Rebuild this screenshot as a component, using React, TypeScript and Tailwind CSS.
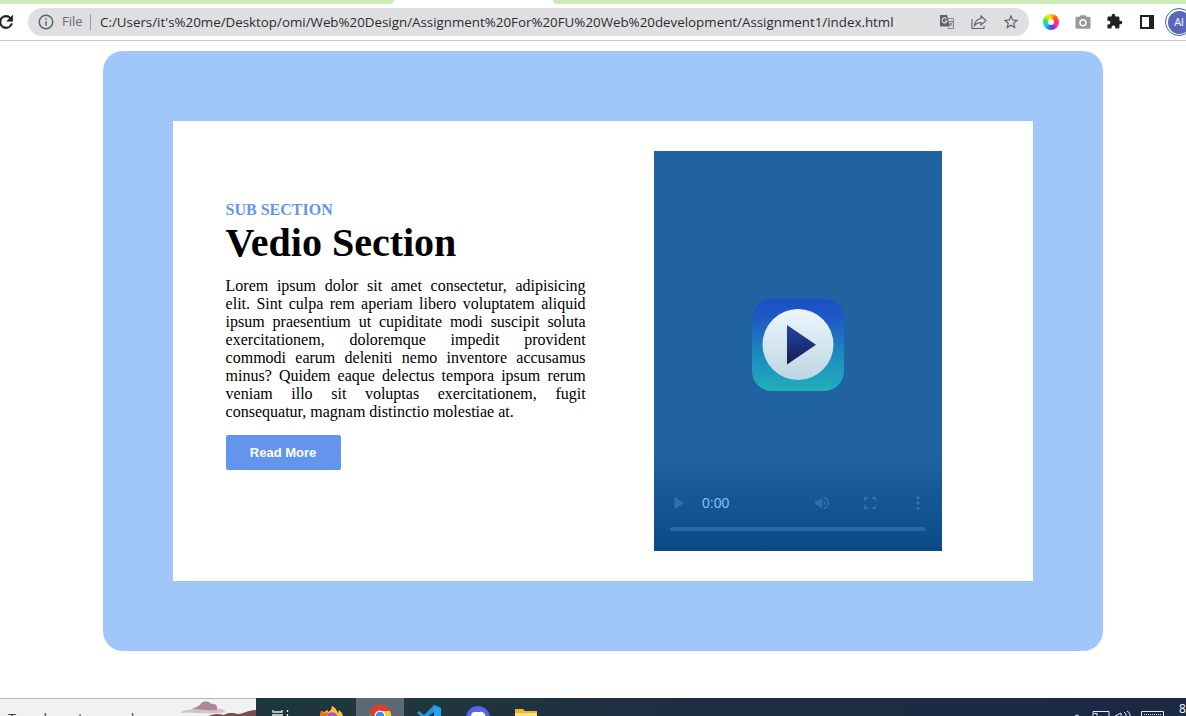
import React from "react";

const Puzzle = () => (
  <svg className="h-[17px] w-[17px]" viewBox="0 0 24 24" fill="#202124">
    <path d="M20.5 11H19V7a2 2 0 0 0-2-2h-4V3.5a2.5 2.5 0 0 0-5 0V5H4a2 2 0 0 0-2 2v3.8h1.500a2.700 2.700 0 0 1 0 5.400H2V20a2 2 0 0 0 2 2h3.800v-1.500a2.700 2.700 0 0 1 5.400 0V22H17a2 2 0 0 0 2-2v-4h1.500a2.500 2.500 0 0 0 0-5z" />
  </svg>
);

function Toolbar() {
  return (
    <div className="flex h-[37px] shrink-0 items-center border-b border-[#c9c9cc] bg-white font-['Open_Sans',sans-serif]">
      <svg className="h-5 w-5 shrink-0 -ml-1" viewBox="0 0 24 24" fill="#202124" stroke="#202124" strokeWidth="0.8">
        <path d="M17.65 6.35A7.950 7.950 0 0 0 12 4a8 8 0 1 0 7.730 10h-2.080A6 6 0 1 1 12 6c1.660 0 3.140.69 4.220 1.780L13 11h7V4z" />
      </svg>
      <div className="ml-3 flex h-7 w-[1001px] shrink-0 items-center rounded-full bg-[#dfdfe1]">
        <svg className="ml-[9px] h-[18px] w-[18px] shrink-0" viewBox="0 0 24 24" fill="#5f6368">
          <path d="M11 7h2v2h-2zm0 4h2v6h-2zm1-9a10 10 0 1 0 0 20 10 10 0 0 0 0-20zm0 18a8 8 0 1 1 0-16 8 8 0 0 1 0 16z" />
        </svg>
        <span className="ml-[7px] w-[21px] text-[13px] text-[#6a6d71]">File</span>
        <span className="ml-[7px] h-4 w-px bg-[#97999c]" />
        <span className="ml-[9px] w-[795px] whitespace-nowrap text-[13.35px] text-[#2b2d30]">
          C:/Users/it's%20me/Desktop/omi/Web%20Design/Assignment%20For%20FU%20Web%20development/Assignment1/index.html
        </span>
        <svg className="ml-[44px] h-4 w-4 shrink-0" viewBox="0 0 16 16">
          <path d="M6 4.500h8.500v10H8.500" fill="none" stroke="#85888b" />
          <path d="M1 1h7l3.200 11.500H2A1 1 0 0 1 1 11.500z" fill="#5f6368" />
          <path d="M7.500 4.800A2.500 2.500 0 1 0 8 7H5.700" fill="none" stroke="#dfdfe1" strokeWidth="1.100" />
          <path d="M10 7.500h4M12 6.500v1M13.500 7.500c-.5 2-1.500 3-2.500 3.500M11 9l2.500 3" fill="none" stroke="#74777a" strokeWidth=".9" />
        </svg>
        <svg className="ml-4 h-4 w-4 shrink-0" viewBox="0 0 16 16" fill="none" stroke="#5f6368" strokeWidth="1.100">
          <path d="M1 5v9.500h12V12" />
          <path d="M10 2l5 4.500-5 4.500V8.500C7 8.500 5 9.500 3.500 11.500 4 7.500 6.500 5 10 4.500z" />
        </svg>
        <svg className="ml-[15px] h-[18px] w-[18px] shrink-0" viewBox="0 0 24 24" fill="#5f6368">
          <path d="M22 9.240l-7.190-.62L12 2 9.190 8.630 2 9.240l5.460 4.730L5.820 21 12 17.270 18.180 21l-1.630-7.030zM12 15.400l-3.760 2.270 1-4.280-3.320-2.880 4.380-.38L12 6.100l1.710 4.040 4.380.38-3.320 2.880 1 4.280z" />
        </svg>
      </div>
      <div className="ml-[14px] flex h-4 w-4 shrink-0 items-center justify-center rounded-full bg-[conic-gradient(#ffd500,#ff5c20,#f43,#f029c8,#8729e8,#217bed,#16d8e8,#2ce54c,#c9ef19,#ffd500)]">
        <span className="h-[6px] w-[6px] rounded-full bg-white" />
      </div>
      <svg className="ml-[15px] h-[18px] w-[18px] shrink-0" viewBox="0 0 24 24" fill="#96989a">
        <path fillRule="evenodd" d="M9 3L7.200 5H4a2 2 0 0 0-2 2v12a2 2 0 0 0 2 2h16a2 2 0 0 0 2-2V7a2 2 0 0 0-2-2h-3.200L15 3zm3 5a5 5 0 1 1 0 10 5 5 0 0 1 0-10z" />
        <circle cx="12" cy="13" r="3" />
      </svg>
      <div className="ml-[14px] h-[18px] w-[18px] shrink-0"><Puzzle /></div>
      <span className="ml-4 h-[14px] w-[14px] shrink-0 border-2 border-r-[5px] border-[#202124]" />
      <div className="ml-[11px] flex h-7 w-7 shrink-0 items-center justify-center rounded-full border-[1.5px] border-[#3268ba] bg-white">
        <span className="flex h-[23px] w-[23px] items-center justify-center rounded-full bg-[#5966bb] text-[11px] text-white">Al</span>
      </div>
    </div>
  );
}

function VideoPanel() {
  return (
    <div className="flex h-[400px] w-[288px] shrink-0 flex-col bg-[linear-gradient(#2162a0_0%,#2162a0_76%,#155796_87%,#0c4a87_100%)]">
      <svg className="mx-auto mt-[147px] h-[94px] w-[94px] shrink-0" viewBox="0 0 94 94">
        <defs>
          <linearGradient id="tile" x1="0" y1="0" x2="0" y2="1">
            <stop offset="0" stopColor="#194fc7" /><stop offset=".2" stopColor="#1e59c2" /><stop offset=".65" stopColor="#1d8fc0" /><stop offset="1" stopColor="#22aebb" />
          </linearGradient>
          <linearGradient id="disc" x1="0" y1="0" x2="0" y2="1">
            <stop stopColor="#ecf7fc" /><stop offset="1" stopColor="#bed5e2" />
          </linearGradient>
          <linearGradient id="arrow" x1="0" y1="0" x2="0" y2="1">
            <stop stopColor="#21469f" /><stop offset=".5" stopColor="#1c3180" /><stop offset="1" stopColor="#151d50" />
          </linearGradient>
        </defs>
        <rect x="1" y="1" width="92" height="92" rx="20" fill="url(#tile)" />
        <circle cx="47" cy="46.500" r="35.500" fill="url(#disc)" />
        <path d="M36 27v39.500l29-19.700z" fill="url(#arrow)" />
      </svg>
      <div className="mt-[101px] flex h-5 items-center font-['Liberation_Sans',sans-serif]">
        <svg className="ml-[16px] h-[18px] w-[18px]" viewBox="0 0 24 24" fill="#3070ad"><path d="M6 4v16l13-8z" /></svg>
        <span className="ml-[14px] w-[30px] text-[14px] leading-5 text-[#80c0fb]">0:00</span>
        <svg className="ml-[81px] h-[18px] w-[18px]" viewBox="0 0 24 24" fill="#3070ad">
          <path d="M3 9v6h4l5 5V4L7 9zm13.500 3A4.500 4.500 0 0 0 14 7.970v8.050A4.500 4.500 0 0 0 16.500 12zM14 3.230v2.060a7 7 0 0 1 0 13.420v2.060a9 9 0 0 0 0-17.540z" />
        </svg>
        <svg className="ml-[30px] h-[18px] w-[18px]" viewBox="0 0 24 24" fill="none" stroke="#3070ad" strokeWidth="2.4">
          <path d="M5 9V5h4M15 5h4v4M19 15v4h-4M9 19H5v-4" />
        </svg>
        <svg className="ml-[30px] h-[18px] w-[18px]" viewBox="0 0 24 24" fill="#3070ad"><circle cx="12" cy="5" r="2.300" /><circle cx="12" cy="12" r="2.300" /><circle cx="12" cy="19" r="2.300" /></svg>
      </div>
      <div className="mx-4 mt-[14px] h-1 shrink-0 rounded-full bg-[#286aae]" />
    </div>
  );
}

function Taskbar() {
  return (
    <div className="flex h-[18px] shrink-0 items-start overflow-hidden bg-[linear-gradient(90deg,#20363e_0%,#20363e_35%,#1d2d42_60%,#1a2944_100%)]">
      <div className="flex h-[18px] w-64 shrink-0 overflow-hidden border-t border-[#b8b8b8] bg-[#f1f1f1]">
        <span className="ml-2 mt-[9px] w-[172px] whitespace-nowrap font-['Open_Sans',sans-serif] text-[14.3px] leading-[22px] text-[#3b3b3b]">Type here to search</span>
        <svg className="h-[17px] w-[76px] shrink-0" viewBox="0 0 76 17">
          <path d="M1 14c1-4 8-2 11-4 1-3 6-1 8-4 2-5 10-4 11-1 5-1 7 2 6 5 4-1 8 1 8 3-11 3-30 0-44 1z" fill="#d2c2c9" />
          <path d="M12 10c4 0 5-3 8-4 2-5 10-4 11-1 5-1 7 3 6 6-8 1-17-1-25-1z" fill="#aa8993" />
          <path d="M28 17c5-2 10-3 16-1 4-3 10-2 14-1 5 0 10-4 18-4v6z" fill="#7b4d4b" />
        </svg>
      </div>
      <div className="flex h-[18px] w-[100px] shrink-0 pt-3">
        <svg className="ml-4 h-[6px] w-[17px]" viewBox="0 0 17 6" fill="none" stroke="#e5eded" strokeWidth="1.300"><path d="M0 5h11M1 0v2h9V0M15.500 0v2M15.500 4v2" /></svg>
        <svg className="-mt-1 ml-[31px] h-[10px] w-[23px]" viewBox="0 0 23 10">
          <path d="M0 10l1-5 3 1 4-2v2l3-2 1-4c4 2 5 5 6 7l1-3q3 2 4 6z" fill="#ffc328" /><path d="M0 10l1-5 4 2 3-1-1 4z" fill="#f36c22" /><path d="M7 8q4-3 8-1l3 3H8z" fill="#a655d9" />
        </svg>
      </div>
      <div className="h-[18px] w-12 shrink-0 bg-[#5c6b73] pt-[7px]">
        <svg className="mx-auto h-[22px] w-[22px]" viewBox="0 0 22 22"><path d="M0 11a11 11 0 0 1 21-5H11z" fill="#e23b2e" /><path d="M11 6h10a11 11 0 0 1-10 16z" fill="#fcc934" /><path d="M1 6A11 11 0 0 0 11 22l1-8z" fill="#34a853" /><path d="M0.500 8A11 11 0 0 1 21 6H11L4 12z" fill="#e23b2e" /><circle cx="11" cy="11" r="5.500" fill="#fff" /><circle cx="11" cy="11" r="4.300" fill="#4285f4" /></svg>
      </div>
      <svg className="ml-[13px] mt-[7px] h-6 w-6 shrink-0" viewBox="0 0 24 24"><path d="M17 0l7 3v18l-7 3L7 14l-5 4-2-2 5-4-5-4 2-2 5 4zM17 7l-7 5 7 5z" fill="#2697df" /><path d="M17 0l7 3v18l-7 3z" fill="#22a5ed" /></svg>
      <svg className="ml-[25px] mt-2 h-6 w-6 shrink-0" viewBox="0 0 24 24"><circle cx="12" cy="12" r="12" fill="#5865e8" /><path d="M6 7q3-2 4-1h4q1-1 4 1 3 5 2 9-4 3-5 0H9q-2 3-5 0Q4 11 6 7z" fill="#fff" /></svg>
      <svg className="ml-[25px] mt-[10px] h-5 w-[22px] shrink-0" viewBox="0 0 22 20"><path d="M0 1h8l2 2h12v17H0z" fill="#efb52c" /><path d="M0 5h22v15H0z" fill="#ffe184" /></svg>
      <svg className="ml-[536px] mt-[10px] h-2 w-[92px] shrink-0" viewBox="0 0 92 8" fill="none" stroke="#e8edf2">
        <path d="M2 8l2-1 2 1M20 8V3.500h16V8M21 5.500h3v3M42 8l6-3v3M51 4q3 2 2 4M54 3q4 2 3 5M68.500 8V3.500h22V8" /><path d="M71 6.500h18" strokeDasharray="1 1" />
      </svg>
      <span className="ml-auto w-[7px] whitespace-nowrap font-['Open_Sans',sans-serif] text-[12px] leading-[22px] text-white">8</span>
    </div>
  );
}

export default function App() {
  return (
    <div className="flex h-[716px] w-[1186px] flex-col overflow-hidden bg-white">
      <div className="flex h-1 shrink-0 justify-between">
        <span className="w-[394px] rounded-br-[5px] bg-[#cdebb9]" />
        <span className="w-[633px] rounded-bl-[5px] bg-[#cdebb9]" />
      </div>
      <Toolbar />
      <main className="ml-[103px] mt-[10px] h-[600px] w-[1000px] shrink-0 rounded-[20px] bg-[#a0c7fa] p-[70px]">
        <section className="flex h-[460px] w-[860px] items-start bg-white pl-[52.6px] pt-[30px] font-['Liberation_Serif',serif]">
          <div className="mr-[68.4px] w-[360px] shrink-0 pt-[49px] text-black">
            <h4 className="text-[16px] font-bold leading-5 text-[#6495ed]">SUB SECTION</h4>
            <h1 className="text-[40px] font-bold leading-[46px]">Vedio Section</h1>
            <p className="mt-[11px] text-justify text-base leading-[18px]">
              Lorem ipsum dolor sit amet consectetur, adipisicing elit. Sint culpa rem aperiam libero voluptatem aliquid ipsum praesentium ut cupiditate modi suscipit soluta exercitationem, doloremque impedit provident commodi earum deleniti nemo inventore accusamus minus? Quidem eaque delectus tempora ipsum rerum veniam illo sit voluptas exercitationem, fugit consequatur, magnam distinctio molestiae at.
            </p>
            <button className="mt-[14px] flex h-[35px] w-[115px] items-center justify-center rounded-[2px] bg-[#6495ed] font-['Liberation_Sans',sans-serif] text-[13px] font-bold text-white">Read More</button>
          </div>
          <VideoPanel />
        </section>
      </main>
      <div className="flex-1" />
      <Taskbar />
    </div>
  );
}
